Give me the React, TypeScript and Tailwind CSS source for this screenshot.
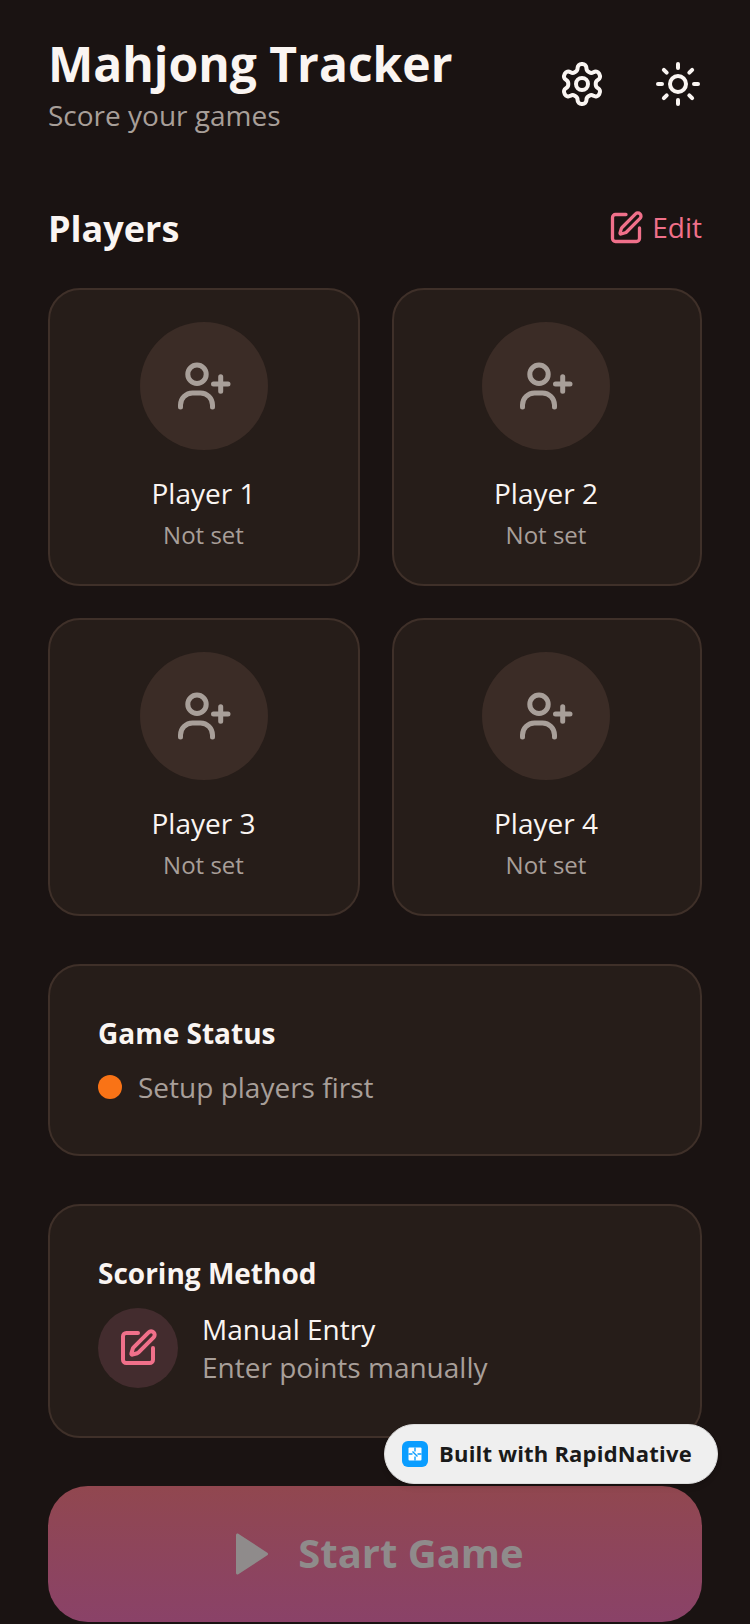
import { Sun, SquarePen } from "lucide-react";

function Gear() {
  return (
    <svg width="48" height="48" viewBox="0 0 24 24" fill="none" stroke="#faf5f2" strokeWidth="2" strokeLinecap="round" strokeLinejoin="round">
      <path d="M12.22 2h-.44a2 2 0 0 0-2 2v.18a2 2 0 0 1-1 1.73l-.43.25a2 2 0 0 1-2 0l-.15-.08a2 2 0 0 0-2.73.73l-.22.38a2 2 0 0 0 .73 2.73l.15.1a2 2 0 0 1 1 1.72v.51a2 2 0 0 1-1 1.74l-.15.09a2 2 0 0 0-.73 2.73l.22.38a2 2 0 0 0 2.73.73l.15-.08a2 2 0 0 1 2 0l.43.25a2 2 0 0 1 1 1.73V20a2 2 0 0 0 2 2h.44a2 2 0 0 0 2-2v-.18a2 2 0 0 1 1-1.73l.43-.25a2 2 0 0 1 2 0l.15.08a2 2 0 0 0 2.73-.73l.22-.39a2 2 0 0 0-.73-2.73l-.15-.08a2 2 0 0 1-1-1.74v-.5a2 2 0 0 1 1-1.74l.15-.09a2 2 0 0 0 .73-2.73l-.22-.38a2 2 0 0 0-2.73-.73l-.15.08a2 2 0 0 1-2 0l-.43-.25a2 2 0 0 1-1-1.73V4a2 2 0 0 0-2-2z" />
      <circle cx="12" cy="12" r="3" />
    </svg>
  );
}

function AddUser() {
  return (
    <svg width="64" height="64" viewBox="0 0 64 64" fill="none" stroke="#a89f99" strokeWidth="5" strokeLinecap="round">
      <circle cx="25" cy="20.3" r="9.2" />
      <path d="M8.5 53v-2a12 12 0 0 1 12-12h8a12 12 0 0 1 12 12v2" />
      <path d="M41.5 30h14.5M48.7 22.7v14.6" />
    </svg>
  );
}

function LeftCard({ name }: { name: string }) {
  return (
    <div className="flex h-[298px] flex-col items-center rounded-[32px] border-2 border-[#3f3029] bg-[#261d19] pt-8">
      <div className="flex h-32 w-32 items-center justify-center rounded-full bg-[#3b2c26]">
        <AddUser />
      </div>
      <div className="mt-6 mr-px text-[28px] leading-[38px] text-[#faf5f2]">{name}</div>
      <div className="mt-[7px] mr-px text-2xl leading-8 text-[#a89f99]">Not set</div>
    </div>
  );
}

function RightCard({ name }: { name: string }) {
  return (
    <div className="flex h-[298px] flex-col items-center rounded-[32px] border-2 border-[#3f3029] bg-[#261d19] pt-8 pr-[2px]">
      <div className="flex h-32 w-32 items-center justify-center rounded-full bg-[#3b2c26]">
        <AddUser />
      </div>
      <div className="mt-6 text-[28px] leading-[38px] text-[#faf5f2]">{name}</div>
      <div className="mt-[7px] text-2xl leading-8 text-[#a89f99]">Not set</div>
    </div>
  );
}

export default function App() {
  return (
    <div className="relative h-[1624px] overflow-hidden bg-[#1a1312] px-12 pt-8 font-['Open_Sans',sans-serif]">
      <header className="flex items-center justify-between">
        <div>
          <h1 className="text-5xl leading-16 font-bold text-[#faf5f2]">Mahjong Tracker</h1>
          <p className="mb-[2px] text-[28px] leading-[38px] text-[#a89f99]">Score your games</p>
        </div>
        <div className="flex items-center gap-12">
          <Gear />
          <Sun size={48} color="#faf5f2" />
        </div>
      </header>

      <div className="mt-16 mb-8 flex h-14 items-center justify-between">
        <h2 className="mt-[2px] text-4xl leading-14 font-bold text-[#faf5f2]">Players</h2>
        <div className="flex items-center gap-2">
          <SquarePen size={36} color="#f0708a" strokeWidth={2.2} />
          <span className="mb-[2px] text-[28px] leading-10 text-[#f0708a]">Edit</span>
        </div>
      </div>

      <div className="grid grid-cols-[312px_310px] gap-8">
        <LeftCard name="Player 1" />
        <RightCard name="Player 2" />
        <LeftCard name="Player 3" />
        <RightCard name="Player 4" />
      </div>

      <section className="mt-12 rounded-[32px] border-2 border-[#3f3029] bg-[#261d19] p-12">
        <h3 className="mb-4 text-[28px] leading-[38px] font-bold text-[#faf5f2]">Game Status</h3>
        <div className="flex items-center gap-4">
          <span className="h-6 w-6 rounded-full bg-[#f97316]" />
          <span className="text-[28px] leading-[38px] text-[#a89f99]">Setup players first</span>
        </div>
      </section>

      <section className="mt-12 rounded-[32px] border-2 border-[#3f3029] bg-[#261d19] p-12">
        <h3 className="mb-4 text-[28px] leading-[38px] font-bold text-[#faf5f2]">Scoring Method</h3>
        <div className="flex items-center gap-6">
          <div className="flex h-20 w-20 items-center justify-center rounded-full bg-[#432c2e]">
            <SquarePen size={40} color="#f0708a" strokeWidth={2.4} />
          </div>
          <div>
            <div className="text-[28px] leading-[38px] text-[#faf5f2]">Manual Entry</div>
            <div className="text-[28px] leading-[38px] text-[#a89f99]">Enter points manually</div>
          </div>
        </div>
      </section>

      <button className="mt-12 flex h-[136px] w-full items-center justify-center gap-6 rounded-[40px] bg-gradient-to-b from-[#91474f] to-[#8a4268]">
        <svg width="48" height="48" viewBox="0 0 48 48" fill="#8f8b8b">
          <path d="M10 5c0-1.3 1.3-1.9 2.3-1.3l29 19c1 .7 1 1.9 0 2.6l-29 19c-1 .6-2.3 0-2.3-1.3z" />
        </svg>
        <span className="mb-[2px] text-[40px] leading-[56px] font-bold text-[#8f8b8b]">Start Game</span>
      </button>

      <div className="absolute top-[1424px] left-[384px] flex h-[60px] w-[334px] items-center gap-[11px] rounded-full border border-[#dcdcdc] bg-[#efefef] pl-[17px] shadow-md">
        <svg width="26" height="26" viewBox="0 0 26 26">
          <rect width="26" height="26" rx="6" fill="#0a9dff" />
          <rect x="6.5" y="6.5" width="13" height="13" rx="1" fill="#fff" />
          <path d="M13 6.5v4M13 15.5v4M6.5 13h4M15.5 13h4M10.5 10.5l5 5" stroke="#0a9dff" strokeWidth="1.4" />
        </svg>
        <span className="mb-[2px] text-[22px] leading-8 font-bold tracking-[0.2px] text-[#1a1a1a]">Built with RapidNative</span>
      </div>
    </div>
  );
}
